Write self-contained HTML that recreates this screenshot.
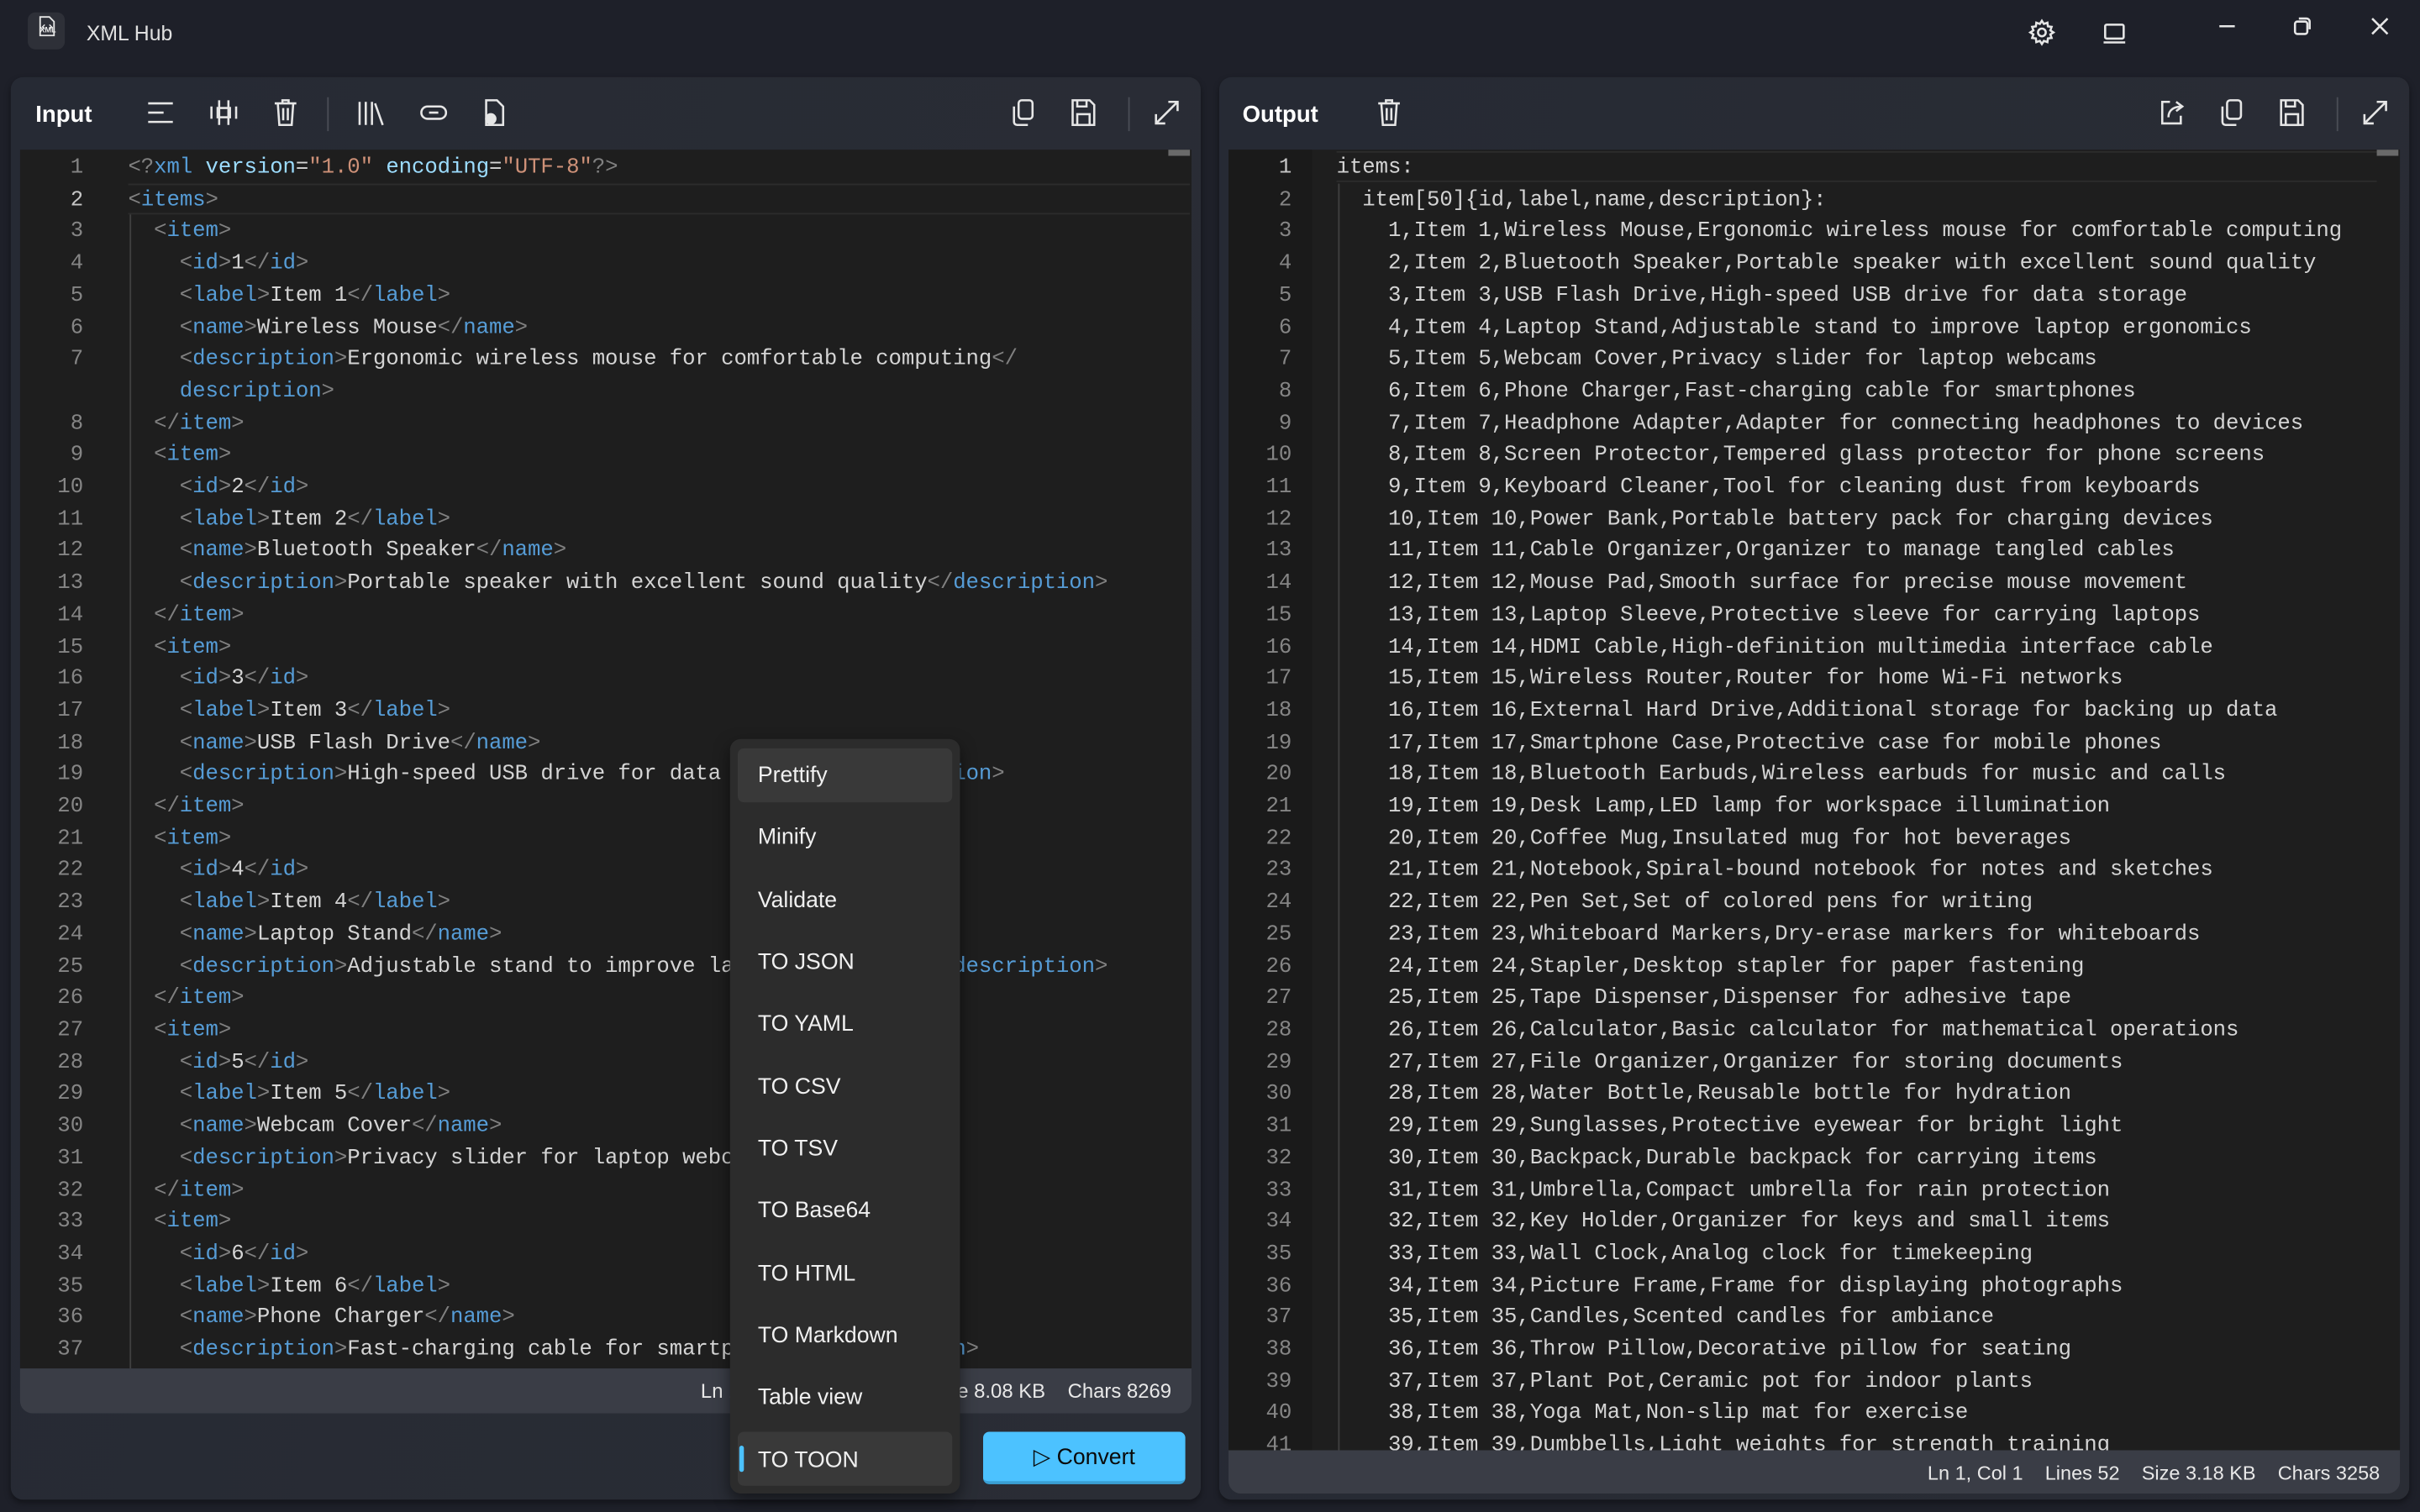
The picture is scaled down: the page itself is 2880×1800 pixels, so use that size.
<!DOCTYPE html>
<html><head><meta charset="utf-8"><style>
html,body{margin:0;padding:0;width:2880px;height:1800px;overflow:hidden;background:#1d2029;}
#s{position:absolute;left:0;top:0;width:1568px;height:980px;transform:scale(1.836735);transform-origin:0 0;background:#1e2029;font-family:"Segoe UI","Liberation Sans",sans-serif;color:#e8e8e8;}
.abs{position:absolute}
.panel{position:absolute;top:50px;height:922px;background:linear-gradient(100deg,#262a34,#2a2d35);border-radius:8px;box-shadow:0 2px 4px rgba(0,0,0,.4)}
.ttl{position:absolute;top:66px;font-size:15px;font-weight:600;color:#fff}
.ed{position:absolute;background:#1e1e1e;overflow:hidden;font-family:"Liberation Mono",monospace;font-size:14px}
.ln{position:absolute;left:0;top:2px;text-align:right;color:#858585;white-space:pre;line-height:20.7px}
.code{position:absolute;top:2px;white-space:pre;line-height:20.7px;color:#d4d4d4;letter-spacing:-0.05px}
.g{color:#808080}.t{color:#569cd6}.a{color:#9cdcfe}.s{color:#ce9178}
.status{position:absolute;background:#3a3d46;font-size:13px;color:#e8e8e8;white-space:pre;text-align:right}
svg{position:absolute;fill:none;stroke:#e6e6e6;stroke-width:1.4}
.menu{position:absolute;left:473px;top:479px;width:149px;height:489px;background:#2c2c2c;border-radius:7px;box-shadow:0 4px 10px rgba(0,0,0,.5)}
.mi{position:absolute;left:18px;font-size:14.5px;color:#f0f0f0}
</style></head><body><div id="s">
<div class="abs" style="left:18px;top:8px;width:24px;height:24px;border-radius:5px;background:#2e3038"></div>
<svg style="left:18px;top:8px" width="24" height="24" viewBox="0 0 24 24"><path d="M8 3h6l3 3v9H8z" stroke-width="1"/><path d="M11 8l-1.5 1.5L11 11M14 8l1.5 1.5L14 11" stroke-width=".8"/></svg>
<div class="abs" style="left:19px;top:17px;font-size:5px;font-weight:bold;width:24px;text-align:center">XML</div>
<div class="abs" style="left:56px;top:14px;font-size:13.5px;color:#e0e0e0">XML Hub</div>
<svg style="left:1314px;top:12px" width="18" height="18" viewBox="0 0 18 18"><circle cx="9" cy="9" r="2.5"/><path d="M9 1.5l1.3 2 2.3-.8.3 2.4 2.4.3-.8 2.3 2 1.3-2 1.3.8 2.3-2.4.3-.3 2.4-2.3-.8L9 16.5l-1.3-2-2.3.8-.3-2.4-2.4-.3.8-2.3-2-1.3 2-1.3-.8-2.3 2.4-.3.3-2.4 2.3.8z"/></svg>
<svg style="left:1361px;top:12px" width="18" height="18" viewBox="0 0 18 18"><rect x="3" y="4" width="12" height="9" rx="1"/><path d="M2 15.5h14"/></svg>
<svg style="left:1436px;top:10px" width="14" height="14" viewBox="0 0 14 14"><path d="M2 7h10"/></svg>
<svg style="left:1485px;top:10px" width="14" height="14" viewBox="0 0 14 14"><rect x="2" y="4" width="8" height="8" rx="1.5"/><path d="M4.5 2h5a2 2 0 0 1 2 2v5"/></svg>
<svg style="left:1535px;top:10px" width="14" height="14" viewBox="0 0 14 14"><path d="M2 2l10 10M12 2L2 12"/></svg>

<div class="panel" style="left:7px;width:771px"></div>
<div class="ttl" style="left:23px">Input</div>
<svg style="left:94px;top:64px" width="20" height="18" viewBox="0 0 20 18"><path d="M2 3h16M2 9h10M2 15h16"/></svg>
<svg style="left:135px;top:63px" width="20" height="20" viewBox="0 0 20 20"><path d="M7 2v16M13 2v16M2 6v8M18 6v8"/><rect x="6" y="7" width="8" height="6"/></svg>
<svg style="left:176px;top:63px" width="18" height="20" viewBox="0 0 18 20"><path d="M2 4h14M7 4V2h4v2M4 4l1 14h8l1-14M7.5 7v8M10.5 7v8"/></svg>
<div class="abs" style="left:212px;top:63px;width:1px;height:22px;background:#4a4d56"></div>
<svg style="left:230px;top:63px" width="20" height="20" viewBox="0 0 20 20"><path d="M3 3v15M7 3v15M11 3v15M13 4l5 14"/></svg>
<svg style="left:271px;top:63px" width="20" height="20" viewBox="0 0 20 20"><rect x="2" y="6" width="16" height="8" rx="4"/><path d="M7 10h6"/></svg>
<svg style="left:311px;top:63px" width="18" height="20" viewBox="0 0 18 20"><path d="M4 2h7l4 4v12H4z"/><circle cx="7" cy="14" r="3" fill="#e6e6e6"/></svg>
<svg style="left:654px;top:63px" width="18" height="20" viewBox="0 0 18 20"><rect x="6" y="2" width="9" height="12" rx="2"/><path d="M3 6v10a2 2 0 0 0 2 2h7"/></svg>
<svg style="left:693px;top:63px" width="18" height="20" viewBox="0 0 18 20"><path d="M2 2h11l3 3v13H2z"/><rect x="5" y="11" width="8" height="7"/><path d="M5 2v4h6V2"/></svg>
<div class="abs" style="left:731px;top:63px;width:1px;height:22px;background:#4a4d56"></div>
<svg style="left:746px;top:63px" width="20" height="20" viewBox="0 0 20 20"><path d="M3 17L17 3M11 3h6v6M3 11v6h6"/></svg>

<div class="ed" style="left:13px;top:97px;width:759px;height:790px">
<div class="abs" style="left:70px;top:22px;width:688px;height:20px;border-top:1px solid #2c2c2c;border-bottom:1px solid #2c2c2c;box-sizing:border-box"></div>
<div class="abs" style="left:71px;top:42px;width:1px;height:760px;background:#404040"></div>
<div class="abs" style="left:744px;top:0;width:14px;height:4px;background:#6a6a6a"></div>
<div class="ln" style="width:41px">1
<span style="color:#c6c6c6">2</span>
3
4
5
6
7

8
9
10
11
12
13
14
15
16
17
18
19
20
21
22
23
24
25
26
27
28
29
30
31
32
33
34
35
36
37
</div>
<div class="code" style="left:70px"><span class="g">&lt;?</span><span class="t">xml</span> <span class="a">version</span>=<span class="s">"1.0"</span> <span class="a">encoding</span>=<span class="s">"UTF-8"</span><span class="g">?&gt;</span>
<span class="g">&lt;</span><span class="t">items</span><span class="g">&gt;</span>
  <span class="g">&lt;</span><span class="t">item</span><span class="g">&gt;</span>
    <span class="g">&lt;</span><span class="t">id</span><span class="g">&gt;</span>1<span class="g">&lt;/</span><span class="t">id</span><span class="g">&gt;</span>
    <span class="g">&lt;</span><span class="t">label</span><span class="g">&gt;</span>Item 1<span class="g">&lt;/</span><span class="t">label</span><span class="g">&gt;</span>
    <span class="g">&lt;</span><span class="t">name</span><span class="g">&gt;</span>Wireless Mouse<span class="g">&lt;/</span><span class="t">name</span><span class="g">&gt;</span>
    <span class="g">&lt;</span><span class="t">description</span><span class="g">&gt;</span>Ergonomic wireless mouse for comfortable computing<span class="g">&lt;/</span>
    <span class="t">description</span><span class="g">&gt;</span>
  <span class="g">&lt;/</span><span class="t">item</span><span class="g">&gt;</span>
  <span class="g">&lt;</span><span class="t">item</span><span class="g">&gt;</span>
    <span class="g">&lt;</span><span class="t">id</span><span class="g">&gt;</span>2<span class="g">&lt;/</span><span class="t">id</span><span class="g">&gt;</span>
    <span class="g">&lt;</span><span class="t">label</span><span class="g">&gt;</span>Item 2<span class="g">&lt;/</span><span class="t">label</span><span class="g">&gt;</span>
    <span class="g">&lt;</span><span class="t">name</span><span class="g">&gt;</span>Bluetooth Speaker<span class="g">&lt;/</span><span class="t">name</span><span class="g">&gt;</span>
    <span class="g">&lt;</span><span class="t">description</span><span class="g">&gt;</span>Portable speaker with excellent sound quality<span class="g">&lt;/</span><span class="t">description</span><span class="g">&gt;</span>
  <span class="g">&lt;/</span><span class="t">item</span><span class="g">&gt;</span>
  <span class="g">&lt;</span><span class="t">item</span><span class="g">&gt;</span>
    <span class="g">&lt;</span><span class="t">id</span><span class="g">&gt;</span>3<span class="g">&lt;/</span><span class="t">id</span><span class="g">&gt;</span>
    <span class="g">&lt;</span><span class="t">label</span><span class="g">&gt;</span>Item 3<span class="g">&lt;/</span><span class="t">label</span><span class="g">&gt;</span>
    <span class="g">&lt;</span><span class="t">name</span><span class="g">&gt;</span>USB Flash Drive<span class="g">&lt;/</span><span class="t">name</span><span class="g">&gt;</span>
    <span class="g">&lt;</span><span class="t">description</span><span class="g">&gt;</span>High-speed USB drive for data storage<span class="g">&lt;/</span><span class="t">description</span><span class="g">&gt;</span>
  <span class="g">&lt;/</span><span class="t">item</span><span class="g">&gt;</span>
  <span class="g">&lt;</span><span class="t">item</span><span class="g">&gt;</span>
    <span class="g">&lt;</span><span class="t">id</span><span class="g">&gt;</span>4<span class="g">&lt;/</span><span class="t">id</span><span class="g">&gt;</span>
    <span class="g">&lt;</span><span class="t">label</span><span class="g">&gt;</span>Item 4<span class="g">&lt;/</span><span class="t">label</span><span class="g">&gt;</span>
    <span class="g">&lt;</span><span class="t">name</span><span class="g">&gt;</span>Laptop Stand<span class="g">&lt;/</span><span class="t">name</span><span class="g">&gt;</span>
    <span class="g">&lt;</span><span class="t">description</span><span class="g">&gt;</span>Adjustable stand to improve laptop ergonomics<span class="g">&lt;/</span><span class="t">description</span><span class="g">&gt;</span>
  <span class="g">&lt;/</span><span class="t">item</span><span class="g">&gt;</span>
  <span class="g">&lt;</span><span class="t">item</span><span class="g">&gt;</span>
    <span class="g">&lt;</span><span class="t">id</span><span class="g">&gt;</span>5<span class="g">&lt;/</span><span class="t">id</span><span class="g">&gt;</span>
    <span class="g">&lt;</span><span class="t">label</span><span class="g">&gt;</span>Item 5<span class="g">&lt;/</span><span class="t">label</span><span class="g">&gt;</span>
    <span class="g">&lt;</span><span class="t">name</span><span class="g">&gt;</span>Webcam Cover<span class="g">&lt;/</span><span class="t">name</span><span class="g">&gt;</span>
    <span class="g">&lt;</span><span class="t">description</span><span class="g">&gt;</span>Privacy slider for laptop webcams<span class="g">&lt;/</span><span class="t">description</span><span class="g">&gt;</span>
  <span class="g">&lt;/</span><span class="t">item</span><span class="g">&gt;</span>
  <span class="g">&lt;</span><span class="t">item</span><span class="g">&gt;</span>
    <span class="g">&lt;</span><span class="t">id</span><span class="g">&gt;</span>6<span class="g">&lt;/</span><span class="t">id</span><span class="g">&gt;</span>
    <span class="g">&lt;</span><span class="t">label</span><span class="g">&gt;</span>Item 6<span class="g">&lt;/</span><span class="t">label</span><span class="g">&gt;</span>
    <span class="g">&lt;</span><span class="t">name</span><span class="g">&gt;</span>Phone Charger<span class="g">&lt;/</span><span class="t">name</span><span class="g">&gt;</span>
    <span class="g">&lt;</span><span class="t">description</span><span class="g">&gt;</span>Fast-charging cable for smartphones<span class="g">&lt;/</span><span class="t">description</span><span class="g">&gt;</span>
  <span class="g">&lt;/</span><span class="t">item</span><span class="g">&gt;</span>
</div>
</div>
<div class="status" style="left:13px;top:887px;width:759px;height:29px;line-height:30px;border-radius:0 0 8px 8px;box-sizing:border-box;padding-right:13px">Ln 1, Col 1    Lines 302    Size 8.08 KB    Chars 8269</div>
<div class="abs" style="left:637px;top:928px;width:131px;height:34px;background:#4cc2ff;border-radius:4px;border-bottom:2px solid #3a9fd4;box-sizing:border-box;color:#0a0a0a;font-size:14.5px;line-height:35px;text-align:center">▷ Convert</div>

<div class="panel" style="left:790px;width:771px"></div>
<div class="ttl" style="left:805px">Output</div>
<svg style="left:891px;top:63px" width="18" height="20" viewBox="0 0 18 20"><path d="M2 4h14M7 4V2h4v2M4 4l1 14h8l1-14M7.5 7v8M10.5 7v8"/></svg>
<svg style="left:1397px;top:63px" width="20" height="20" viewBox="0 0 20 20"><path d="M9 3H4v14h12v-5"/><path d="M8 13c0-5 4-7 9-7M13 3l4 3-4 3"/></svg>
<svg style="left:1437px;top:63px" width="18" height="20" viewBox="0 0 18 20"><rect x="6" y="2" width="9" height="12" rx="2"/><path d="M3 6v10a2 2 0 0 0 2 2h7"/></svg>
<svg style="left:1476px;top:63px" width="18" height="20" viewBox="0 0 18 20"><path d="M2 2h11l3 3v13H2z"/><rect x="5" y="11" width="8" height="7"/><path d="M5 2v4h6V2"/></svg>
<div class="abs" style="left:1514px;top:63px;width:1px;height:22px;background:#4a4d56"></div>
<svg style="left:1529px;top:63px" width="20" height="20" viewBox="0 0 20 20"><path d="M3 17L17 3M11 3h6v6M3 11v6h6"/></svg>

<div class="ed" style="left:796px;top:97px;width:759px;height:843px">
<div class="abs" style="left:0;top:0;width:54px;height:843px;background:#1a1a1a"></div>
<div class="abs" style="left:70px;top:1px;width:674px;height:20px;border-top:1px solid #2c2c2c;border-bottom:1px solid #2c2c2c;box-sizing:border-box"></div>
<div class="abs" style="left:71px;top:22px;width:1px;height:830px;background:#404040"></div>
<div class="abs" style="left:744px;top:0;width:14px;height:4px;background:#6a6a6a"></div>
<div class="ln" style="width:41px"><span style="color:#c6c6c6">1</span>
2
3
4
5
6
7
8
9
10
11
12
13
14
15
16
17
18
19
20
21
22
23
24
25
26
27
28
29
30
31
32
33
34
35
36
37
38
39
40
41</div>
<div class="code" style="left:70px">items:
  item[50]{id,label,name,description}:
    1,Item 1,Wireless Mouse,Ergonomic wireless mouse for comfortable computing
    2,Item 2,Bluetooth Speaker,Portable speaker with excellent sound quality
    3,Item 3,USB Flash Drive,High-speed USB drive for data storage
    4,Item 4,Laptop Stand,Adjustable stand to improve laptop ergonomics
    5,Item 5,Webcam Cover,Privacy slider for laptop webcams
    6,Item 6,Phone Charger,Fast-charging cable for smartphones
    7,Item 7,Headphone Adapter,Adapter for connecting headphones to devices
    8,Item 8,Screen Protector,Tempered glass protector for phone screens
    9,Item 9,Keyboard Cleaner,Tool for cleaning dust from keyboards
    10,Item 10,Power Bank,Portable battery pack for charging devices
    11,Item 11,Cable Organizer,Organizer to manage tangled cables
    12,Item 12,Mouse Pad,Smooth surface for precise mouse movement
    13,Item 13,Laptop Sleeve,Protective sleeve for carrying laptops
    14,Item 14,HDMI Cable,High-definition multimedia interface cable
    15,Item 15,Wireless Router,Router for home Wi-Fi networks
    16,Item 16,External Hard Drive,Additional storage for backing up data
    17,Item 17,Smartphone Case,Protective case for mobile phones
    18,Item 18,Bluetooth Earbuds,Wireless earbuds for music and calls
    19,Item 19,Desk Lamp,LED lamp for workspace illumination
    20,Item 20,Coffee Mug,Insulated mug for hot beverages
    21,Item 21,Notebook,Spiral-bound notebook for notes and sketches
    22,Item 22,Pen Set,Set of colored pens for writing
    23,Item 23,Whiteboard Markers,Dry-erase markers for whiteboards
    24,Item 24,Stapler,Desktop stapler for paper fastening
    25,Item 25,Tape Dispenser,Dispenser for adhesive tape
    26,Item 26,Calculator,Basic calculator for mathematical operations
    27,Item 27,File Organizer,Organizer for storing documents
    28,Item 28,Water Bottle,Reusable bottle for hydration
    29,Item 29,Sunglasses,Protective eyewear for bright light
    30,Item 30,Backpack,Durable backpack for carrying items
    31,Item 31,Umbrella,Compact umbrella for rain protection
    32,Item 32,Key Holder,Organizer for keys and small items
    33,Item 33,Wall Clock,Analog clock for timekeeping
    34,Item 34,Picture Frame,Frame for displaying photographs
    35,Item 35,Candles,Scented candles for ambiance
    36,Item 36,Throw Pillow,Decorative pillow for seating
    37,Item 37,Plant Pot,Ceramic pot for indoor plants
    38,Item 38,Yoga Mat,Non-slip mat for exercise
    39,Item 39,Dumbbells,Light weights for strength training</div>
</div>
<div class="status" style="left:796px;top:940px;width:759px;height:28px;line-height:29px;border-radius:0 0 8px 8px;box-sizing:border-box;padding-right:13px;font-size:12.8px">Ln 1, Col 1    Lines 52    Size 3.18 KB    Chars 3258</div>

<div class="menu">
<div class="abs" style="left:5px;top:6px;width:139px;height:35px;background:#393939;border-radius:4px"></div>
<div class="abs" style="left:5px;top:449px;width:139px;height:35px;background:#393939;border-radius:4px"></div>
<div class="abs" style="left:6px;top:458px;width:3px;height:17px;background:#4cc2ff;border-radius:2px"></div>
<div class="mi" style="top:16px">Prettify</div>
<div class="mi" style="top:56px">Minify</div>
<div class="mi" style="top:97px">Validate</div>
<div class="mi" style="top:137px">TO JSON</div>
<div class="mi" style="top:177px">TO YAML</div>
<div class="mi" style="top:218px">TO CSV</div>
<div class="mi" style="top:258px">TO TSV</div>
<div class="mi" style="top:298px">TO Base64</div>
<div class="mi" style="top:339px">TO HTML</div>
<div class="mi" style="top:379px">TO Markdown</div>
<div class="mi" style="top:419px">Table view</div>
<div class="mi" style="top:460px">TO TOON</div>
</div>
</div></body></html>
